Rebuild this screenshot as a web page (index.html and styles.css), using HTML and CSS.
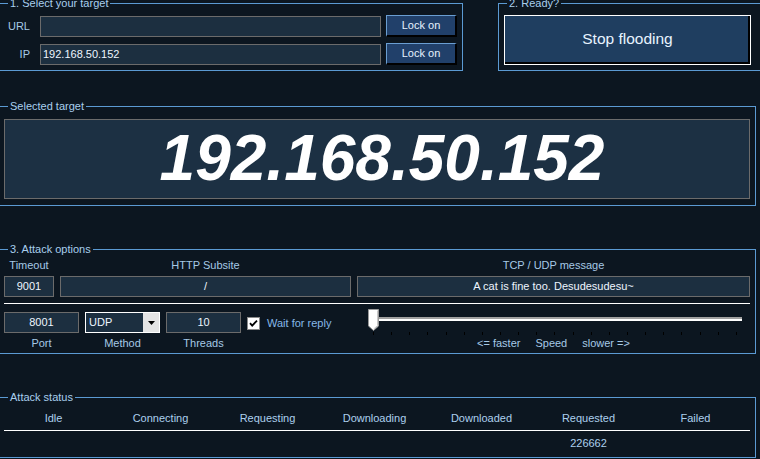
FILE: index.html
```html
<!DOCTYPE html>
<html>
<head>
<meta charset="utf-8">
<title>Flooder</title>
<link rel="stylesheet" href="styles.css">
</head>
<body>
<div class="window">
  <div class="top-row">
    <section class="group g-lock">
      <span class="legend">1. Select your target</span>
      <div class="lock-row">
        <span class="lock-label">URL</span>
        <div class="input url-input"></div>
        <div class="lock-btn">Lock on</div>
      </div>
      <div class="lock-row">
        <span class="lock-label">IP</span>
        <div class="input url-input">192.168.50.152</div>
        <div class="lock-btn">Lock on</div>
      </div>
    </section>
    <section class="group g-ready">
      <span class="legend">2. Ready?</span>
      <div class="stop-btn">Stop flooding</div>
    </section>
  </div>

  <section class="group g-selected">
    <span class="legend">Selected target</span>
    <div class="target-box">192.168.50.152</div>
  </section>

  <section class="group g-options">
    <span class="legend">3. Attack options</span>
    <div class="opt-grid">
      <span class="col-label">Timeout</span>
      <span class="col-label">HTTP Subsite</span>
      <span class="col-label">TCP / UDP message</span>
      <div class="input center">9001</div>
      <div class="input center">/</div>
      <div class="input center">A cat is fine too. Desudesudesu~</div>
    </div>
    <div class="sep"></div>
    <div class="opt-lower">
      <div class="fields">
        <div class="input center">8001</div>
        <div class="select"><span class="select-val">UDP</span><span class="select-arrow"><svg width="7" height="4" viewBox="0 0 7 4"><path d="M0 0H7L3.5 4Z" fill="#000"/></svg></span></div>
        <div class="input center">10</div>
        <span class="col-label">Port</span>
        <span class="col-label">Method</span>
        <span class="col-label">Threads</span>
      </div>
      <div class="check-wrap">
        <svg class="checkbox" width="13" height="13" viewBox="0 0 13 13"><rect x="0.5" y="0.5" width="12" height="12" fill="#fff" stroke="#8a8a8a"/><path d="M3 6.2L5.2 8.6L10 3.6" fill="none" stroke="#000" stroke-width="1.8"/></svg>
        <span class="check-text">Wait for reply</span>
      </div>
      <div class="slider-col">
        <div class="slider">
          <div class="track"></div>
          <div class="ticks"><i></i><i></i><i></i><i></i><i></i><i></i><i></i><i></i><i></i><i></i><i></i><i></i><i></i><i></i><i></i><i></i><i></i><i></i><i></i><i></i><i></i></div>
          <svg class="thumb" width="11" height="22" viewBox="0 0 11 22"><path d="M0.5 0.5H10.5V17L5.5 21.5L0.5 17Z" fill="#fff" stroke="#9a9a9a"/><path d="M9.5 1.5V16.6L5.5 20.2" fill="none" stroke="#c8c8c8"/></svg>
        </div>
        <div class="speed"><span>&lt;= faster</span><span>Speed</span><span>slower =&gt;</span></div>
      </div>
    </div>
  </section>

  <section class="group g-status">
    <span class="legend">Attack status</span>
    <div class="status-grid">
      <span>Idle</span><span>Connecting</span><span>Requesting</span><span>Downloading</span><span>Downloaded</span><span>Requested</span><span>Failed</span>
    </div>
    <div class="status-sep"></div>
    <div class="status-grid values">
      <span></span><span></span><span></span><span></span><span></span><span>226662</span><span></span>
    </div>
  </section>
</div>
</body>
</html>
```
FILE: styles.css
```css
html, body {
  margin: 0;
  padding: 0;
  background: #0c1620;
}
body {
  font-family: "Liberation Sans", Arial, sans-serif;
  font-size: 11px;
  color: #a6c9e6;
  overflow: hidden;
}
.window {
  width: 760px;
  height: 459px;
  overflow: hidden;
  padding-top: 3px;
  box-sizing: border-box;
}
.group {
  position: relative;
  border: 1px solid #5b9ad3;
  box-sizing: border-box;
  margin-left: -1px;
  flex-shrink: 0;
}
.legend {
  position: absolute;
  top: -7px;
  left: 8px;
  padding: 0 2px;
  background: #0c1620;
  line-height: 13px;
  color: #a9cfee;
  white-space: nowrap;
}
.top-row {
  display: flex;
  align-items: flex-start;
}
.g-lock {
  width: 464px;
  height: 68px;
  padding-top: 11px;
  display: flex;
  flex-direction: column;
  gap: 6px;
}
.g-ready {
  margin-left: 35px;
  width: 266px;
  height: 68px;
  padding: 11px 0 0 5px;
}
.lock-row {
  display: flex;
  align-items: center;
  height: 22px;
}
.lock-label {
  width: 30px;
  text-align: right;
  margin-right: 10px;
  color: #a6c9e6;
}
.input {
  box-sizing: border-box;
  height: 21px;
  background: #1c2f40;
  border: 1px solid #6b6b6b;
  color: #eef6ff;
  line-height: 19px;
  padding: 0 2px;
  white-space: nowrap;
  overflow: hidden;
}
.center {
  text-align: center;
}
.url-input {
  width: 341px;
}
.lock-btn {
  box-sizing: border-box;
  margin-left: 5px;
  width: 71px;
  height: 22px;
  background: #21406a;
  border-top: 1px solid #6a9ed2;
  border-left: 1px solid #6a9ed2;
  border-right: 2px solid #000;
  border-bottom: 2px solid #000;
  color: #e6f2ff;
  text-align: center;
  line-height: 19px;
}
.stop-btn {
  box-sizing: border-box;
  width: 247px;
  height: 50px;
  background: #1f3e60;
  border: 1px solid #fff;
  box-shadow: inset -2px -2px 0 #000;
  color: #e8f4ff;
  font-size: 15.5px;
  text-align: center;
  line-height: 46px;
}
.g-selected {
  margin-top: 35px;
  width: 757px;
  height: 100px;
  padding: 12px 0 0 4px;
}
.target-box {
  box-sizing: border-box;
  width: 746px;
  height: 80px;
  background: #1c3043;
  border: 1px solid #6b6b6b;
  padding: 2px 0 0 10px;
  text-align: center;
  color: #fff;
  font-family: "Liberation Sans", Arial, sans-serif;
  font-weight: bold;
  font-style: italic;
  font-size: 64px;
  line-height: 72px;
}
.g-options {
  margin-top: 43px;
  width: 757px;
  height: 105px;
  padding: 9px 0 0 4px;
}
.opt-grid {
  display: grid;
  grid-template-columns: 50px 291px 393px;
  grid-template-rows: 13px 21px;
  column-gap: 6px;
  row-gap: 4px;
}
.col-label {
  text-align: center;
  line-height: 13px;
  color: #a6c9e6;
  white-space: nowrap;
}
.sep {
  width: 746px;
  height: 1px;
  background: #fff;
  margin-top: 6px;
}
.opt-lower {
  display: flex;
  align-items: flex-start;
  width: 746px;
  margin-top: 8px;
}
.fields {
  display: grid;
  grid-template-columns: 75px 75px 75px;
  grid-template-rows: 21px 13px;
  column-gap: 6px;
  row-gap: 4px;
}
.select {
  box-sizing: border-box;
  height: 21px;
  display: flex;
  background: #1c2f40;
  border: 1px solid #fff;
  color: #eef6ff;
}
.select-val {
  flex: 1;
  line-height: 19px;
  padding-left: 3px;
}
.select-arrow {
  width: 16px;
  display: flex;
  align-items: center;
  justify-content: center;
  background: #e4e4e4;
}
.check-wrap {
  display: flex;
  align-items: center;
  height: 21px;
  margin-left: 6px;
}
.checkbox {
  display: block;
  margin-top: 2px;
}
.check-text {
  margin-left: 7px;
  color: #86b8e8;
  white-space: nowrap;
}
.slider-col {
  margin-left: auto;
  width: 382px;
  margin-top: -3px;
}
.slider {
  position: relative;
  height: 24px;
}
.track {
  position: absolute;
  left: 4px;
  top: 8px;
  width: 370px;
  height: 2px;
  background: #fff;
  border-top: 2px solid #a0a0a0;
}
.thumb {
  position: absolute;
  left: 0;
  top: 0;
  display: block;
}
.ticks {
  position: absolute;
  left: 5px;
  top: 23px;
  width: 364px;
  height: 3px;
  display: flex;
  justify-content: space-between;
}
.ticks i {
  display: block;
  width: 1px;
  height: 3px;
  background: #000;
}
.speed {
  display: flex;
  gap: 15px;
  padding-left: 109px;
  margin-top: 4px;
  line-height: 13px;
  color: #a6c9e6;
  white-space: nowrap;
}
.g-status {
  margin-top: 43px;
  width: 757px;
  height: 61px;
  padding-top: 14px;
}
.status-grid {
  display: grid;
  grid-template-columns: repeat(7, 107px);
  text-align: center;
  line-height: 13px;
  color: #acd0ee;
  white-space: nowrap;
}
.status-sep {
  margin: 5px 0 0 4px;
  width: 746px;
  height: 1px;
  background: #fff;
}
.values {
  margin-top: 6px;
}
```
